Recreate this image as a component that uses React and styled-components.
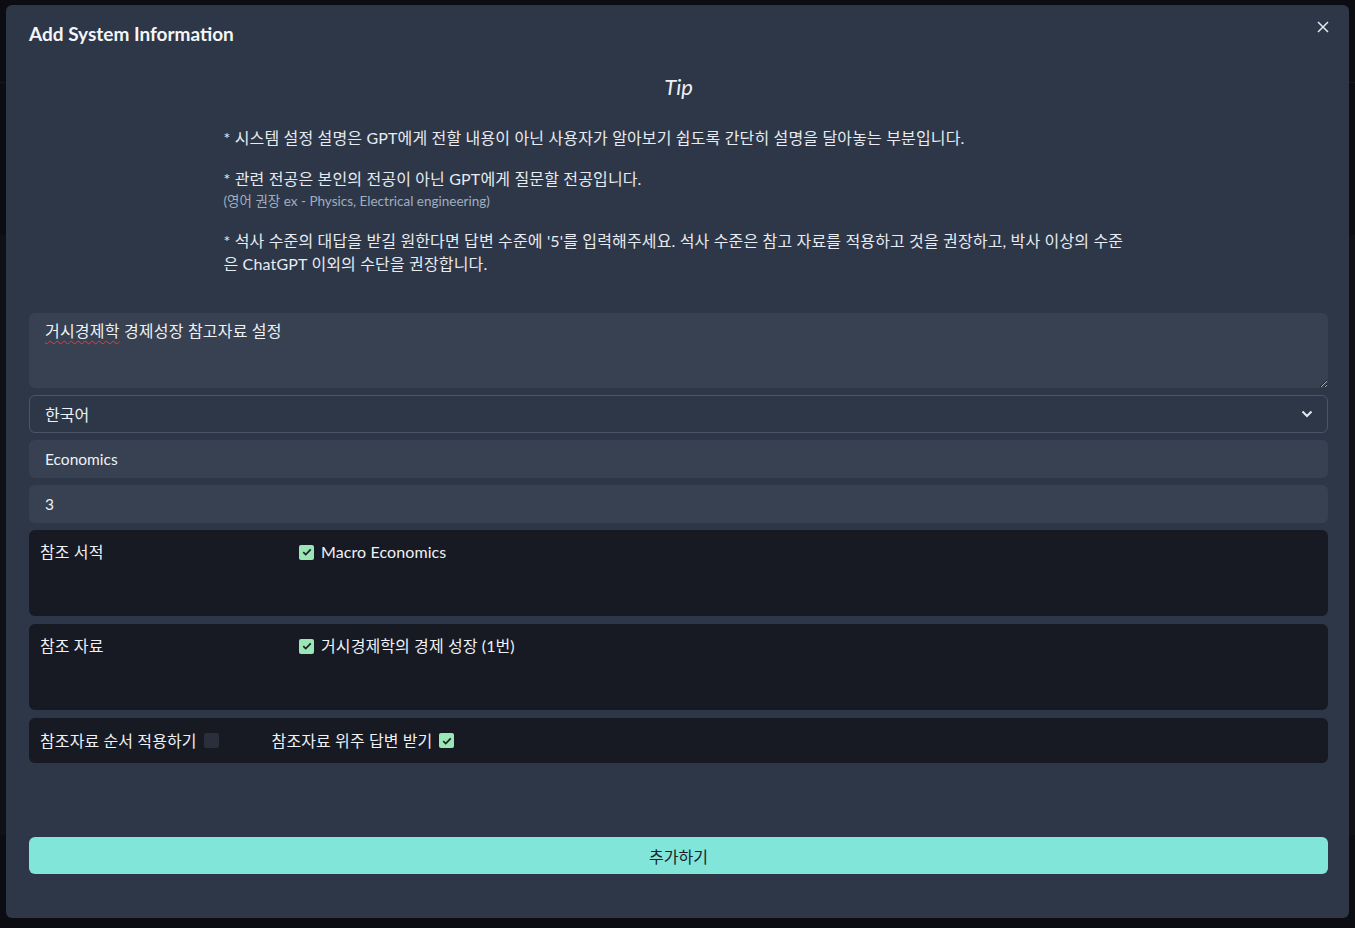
import React from 'react';
import styled, { createGlobalStyle } from 'styled-components';

const GlobalStyle = createGlobalStyle`
  html, body {
    margin: 0;
    padding: 0;
    background: #0b0d12;
    font-family: Lato, "Noto Sans CJK KR", "Noto Sans", sans-serif;
    color: #e2e8f0;
  }
  * {
    box-sizing: border-box;
  }
`;

const Page = styled.div`
  position: relative;
  width: 100%;
  height: 928px;
  overflow: hidden;
  background: #0b0d12;
`;

const PageHeader = styled.div`
  height: 83px;
  border-bottom: 1px solid #15171d;
`;

const PageSection = styled.div`
  margin-top: 152px;
  height: 600px;
  background: #0f1116;
`;

const Overlay = styled.div`
  position: absolute;
  inset: 0;
  padding: 5px 6px 10px 6px;
`;

const Modal = styled.section`
  position: relative;
  width: 1343px;
  height: 913px;
  background: #2d3748;
  border-radius: 6px;
  display: flex;
  flex-direction: column;
`;

const Title = styled.header`
  padding: 15px 23px 0;
  font-size: 19px;
  font-weight: 700;
  line-height: 28px;
  color: #f3f5f8;
`;

const CloseButton = styled.button`
  position: absolute;
  top: 6px;
  right: 10px;
  width: 32px;
  height: 32px;
  border: none;
  background: transparent;
  color: #e2e8f0;
  display: flex;
  align-items: center;
  justify-content: center;
  cursor: pointer;
  padding: 0;
`;

const Body = styled.div`
  padding: 0 21px 0 23px;
  display: flex;
  flex-direction: column;
`;

const TipTitle = styled.div`
  text-align: center;
  font-style: italic;
  font-size: 22px;
  line-height: 30px;
  margin-top: 24px;
  color: #edf0f4;
`;

const TipBox = styled.div`
  width: 910px;
  margin: 24px auto 0;
  font-size: 16px;
  letter-spacing: 0.15px;
  line-height: 23px;
  color: #e8ebf0;
`;

const TipLine = styled.p`
  margin: 0 0 ${(p) => p.$mb ?? 18}px;
`;

const Hint = styled.span`
  display: block;
  font-size: 13.5px;
  letter-spacing: 0;
  color: #a0aec0;
`;

const Form = styled.div`
  margin-top: 38px;
  display: flex;
  flex-direction: column;
  gap: 7px;
`;

const TextArea = styled.div`
  height: 75px;
  background: #374151;
  border-radius: 6px;
  padding: 7px 16px;
  font-size: 16px;
  letter-spacing: 0.2px;
  line-height: 22px;
  color: #eef1f5;
  resize: vertical;
  overflow: auto;
`;

const Misspelled = styled.span`
  text-decoration: underline wavy #e53e3e;
  text-decoration-thickness: 1px;
  text-underline-offset: 3px;
`;

const SelectBox = styled.div`
  height: 38px;
  border: 1px solid #4a5568;
  border-radius: 6px;
  display: flex;
  align-items: center;
  justify-content: space-between;
  padding: 0 14px 0 15px;
  font-size: 16px;
  color: #eef1f5;
`;

const Filled = styled.div`
  height: 38px;
  background: #374151;
  border-radius: 6px;
  display: flex;
  align-items: center;
  padding: 0 16px;
  font-size: 15.5px;
  color: #eef1f5;
`;

const DarkBox = styled.div`
  background: #171923;
  border-radius: 6px;
  min-height: ${(p) => p.$h}px;
  padding: ${(p) => (p.$inline ? '0 11px' : '11px 11px')};
  display: ${(p) => (p.$inline ? 'flex' : 'grid')};
  grid-template-columns: 259px 1fr;
  align-items: ${(p) => (p.$inline ? 'center' : 'start')};
  font-size: 16px;
  letter-spacing: 0.1px;
  line-height: 22px;
  color: #eef1f5;
  margin-top: ${(p) => p.$mt || 0}px;
`;

const CheckItem = styled.label`
  display: inline-flex;
  align-items: center;
  gap: 7px;
  margin-right: ${(p) => p.$mr || 0}px;
`;

const Box = styled.span`
  width: 15px;
  height: 15px;
  border-radius: 2px;
  background: ${(p) => (p.$checked ? '#9ae6b4' : '#2a2f3b')};
  display: inline-flex;
  align-items: center;
  justify-content: center;
  flex-shrink: 0;
`;

const Footer = styled.div`
  margin-top: auto;
  padding: 0 21px 44px 23px;
`;

const SubmitButton = styled.button`
  width: 100%;
  height: 37px;
  border: none;
  border-radius: 6px;
  background: #81e6d9;
  color: #1a202c;
  font-family: inherit;
  font-size: 16px;
  cursor: pointer;
`;

function Check({ checked }) {
  return (
    <Box $checked={checked}>
      {checked && (
        <svg width="10" height="10" viewBox="0 0 12 10">
          <path d="M1.5 5.2 4.5 8.2 10.5 1.8" fill="none" stroke="#1a202c" strokeWidth="2" />
        </svg>
      )}
    </Box>
  );
}

export default function App() {
  return (
    <>
      <GlobalStyle />
      <Page>
        <PageHeader />
        <PageSection />
        <Overlay>
          <Modal>
            <Title>Add System Information</Title>
            <CloseButton aria-label="close">
              <svg width="12" height="12" viewBox="0 0 12 12">
                <path d="M1 1 11 11M11 1 1 11" stroke="#e2e8f0" strokeWidth="1.5" />
              </svg>
            </CloseButton>
            <Body>
              <TipTitle>Tip</TipTitle>
              <TipBox>
                <TipLine>* 시스템 설정 설명은 GPT에게 전할 내용이 아닌 사용자가 알아보기 쉽도록 간단히 설명을 달아놓는 부분입니다.</TipLine>
                <TipLine $mb={16}>
                  * 관련 전공은 본인의 전공이 아닌 GPT에게 질문할 전공입니다.
                  <Hint>(영어 권장 ex - Physics, Electrical engineering)</Hint>
                </TipLine>
                <TipLine $mb={0}>
                  * 석사 수준의 대답을 받길 원한다면 답변 수준에 '5'를 입력해주세요. 석사 수준은 참고 자료를 적용하고 것을 권장하고, 박사 이상의 수준은 ChatGPT 이외의 수단을 권장합니다.
                </TipLine>
              </TipBox>
              <Form>
                <TextArea>
                  <Misspelled>거시경제학</Misspelled> 경제성장 참고자료 설정
                </TextArea>
                <SelectBox>
                  <span>한국어</span>
                  <svg width="12" height="8" viewBox="0 0 12 8">
                    <path d="M1.5 1.5 6 6 10.5 1.5" fill="none" stroke="#e2e8f0" strokeWidth="2" />
                  </svg>
                </SelectBox>
                <Filled>Economics</Filled>
                <Filled>3</Filled>
                <DarkBox $h={86}>
                  <span>참조 서적</span>
                  <CheckItem>
                    <Check checked />
                    Macro Economics
                  </CheckItem>
                </DarkBox>
                <DarkBox $h={86} $mt={1}>
                  <span>참조 자료</span>
                  <CheckItem>
                    <Check checked />
                    거시경제학의 경제 성장 (1번)
                  </CheckItem>
                </DarkBox>
                <DarkBox $h={45} $mt={1} $inline>
                  <CheckItem $mr={53}>
                    참조자료 순서 적용하기
                    <Check />
                  </CheckItem>
                  <CheckItem>
                    참조자료 위주 답변 받기
                    <Check checked />
                  </CheckItem>
                </DarkBox>
              </Form>
            </Body>
            <Footer>
              <SubmitButton>추가하기</SubmitButton>
            </Footer>
          </Modal>
        </Overlay>
      </Page>
    </>
  );
}
